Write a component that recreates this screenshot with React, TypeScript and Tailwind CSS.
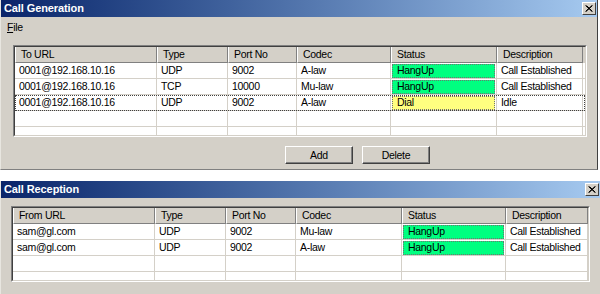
import React from "react";

type Cell = { text: string; status?: "green" | "yellow" };

function CloseBtn() {
  return (
    <div className="w-[14px] h-[13px] bg-[#d4d0c8] border border-t-white border-l-white border-b-[#404040] border-r-[#404040] flex items-center justify-center">
      <svg width="8" height="7" viewBox="0 0 8 7">
        <path d="M0.5 0.5 L7 6.5 M1.5 0.5 L7.5 6.5 M7 0.5 L0.5 6.5 M7.5 0.5 L1 6.5" stroke="#000" strokeWidth="1" />
      </svg>
    </div>
  );
}

function TitleBar({ title }: { title: string }) {
  return (
    <div className="h-[17px] flex items-center justify-between bg-linear-to-r from-[#0a246a] to-[#a6caf0] pl-[3px] pr-[1px]">
      <span className="text-white font-bold text-[11px] leading-none tracking-[-0.1px]">{title}</span>
      <CloseBtn />
    </div>
  );
}

function Grid({
  widths,
  headers,
  rows,
  emptyRows,
  partial,
  focusRow,
  className,
}: {
  widths: number[];
  headers: string[];
  rows: Cell[][];
  emptyRows: number;
  partial: number;
  focusRow?: number;
  className: string;
}) {
  return (
    <div className={"border border-t-[#808080] border-l-[#808080] border-b-white border-r-white " + className}>
      <div className="h-full border border-t-[#404040] border-l-[#404040] border-b-[#d4d0c8] border-r-[#d4d0c8] bg-white overflow-hidden">
        <div className="flex h-[16px] bg-[#d4d0c8]">
          {headers.map((h, i) => (
            <div
              key={i}
              style={{ width: widths[i] }}
              className="shrink-0 h-full flex items-center pl-[5px] border-l border-l-white border-r border-r-[#808080] border-b border-b-[#808080]"
            >
              {h}
            </div>
          ))}
        </div>
        {rows.map((r, ri) => (
          <div
            key={ri}
            className={
              "flex h-[16px] border-b border-[#d4d0c8]" +
              (ri === focusRow ? " outline-1 outline-dotted outline-[#404040] -outline-offset-1" : "")
            }
          >
            {r.map((c, ci) => (
              <div
                key={ci}
                style={{ width: widths[ci] }}
                className="shrink-0 h-full border-r border-[#d4d0c8] flex items-center"
              >
                {c.status ? (
                  <div
                    className={
                      "mx-[1px] h-[14px] w-full flex items-center pl-[4px] border border-dotted border-[#707070] " +
                      (c.status === "green" ? "bg-[#00ff80]" : "bg-[#ffff80]")
                    }
                  >
                    {c.text}
                  </div>
                ) : (
                  <span className="pl-[4px]">{c.text}</span>
                )}
              </div>
            ))}
          </div>
        ))}
        {Array.from({ length: emptyRows }).map((_, ri) => (
          <div key={"e" + ri} className="flex h-[16px] border-b border-[#d4d0c8]">
            {widths.map((w, ci) => (
              <div key={ci} style={{ width: w }} className="shrink-0 h-full border-r border-[#d4d0c8]" />
            ))}
          </div>
        ))}
        <div className="flex" style={{ height: partial }}>
          {widths.map((w, ci) => (
            <div key={ci} style={{ width: w }} className="shrink-0 h-full border-r border-[#d4d0c8]" />
          ))}
        </div>
      </div>
    </div>
  );
}

function Button({ label }: { label: string }) {
  return (
    <div className="w-[68px] h-[18px] bg-[#d4d0c8] border border-t-white border-l-white border-b-[#404040] border-r-[#404040] flex items-center justify-center shadow-[inset_-1px_-1px_0_#808080]">
      {label}
    </div>
  );
}

export default function App() {
  const genHeaders = ["To URL", "Type", "Port No", "Codec", "Status", "Description"];
  const genWidths = [142, 71, 69, 94, 106, 86];
  const genRows: Cell[][] = [
    [{ text: "0001@192.168.10.16" }, { text: "UDP" }, { text: "9002" }, { text: "A-law" }, { text: "HangUp", status: "green" }, { text: "Call Established" }],
    [{ text: "0001@192.168.10.16" }, { text: "TCP" }, { text: "10000" }, { text: "Mu-law" }, { text: "HangUp", status: "green" }, { text: "Call Established" }],
    [{ text: "0001@192.168.10.16" }, { text: "UDP" }, { text: "9002" }, { text: "A-law" }, { text: "Dial", status: "yellow" }, { text: "Idle" }],
  ];
  const recHeaders = ["From URL", "Type", "Port No", "Codec", "Status", "Description"];
  const recWidths = [142, 71, 70, 106, 104, 82];
  const recRows: Cell[][] = [
    [{ text: "sam@gl.com" }, { text: "UDP" }, { text: "9002" }, { text: "Mu-law" }, { text: "HangUp", status: "green" }, { text: "Call Established" }],
    [{ text: "sam@gl.com" }, { text: "UDP" }, { text: "9002" }, { text: "A-law" }, { text: "HangUp", status: "green" }, { text: "Call Established" }],
  ];

  return (
    <div
      className="w-[600px] h-[294px] bg-white text-black text-[10.5px] leading-none tracking-[-0.3px] overflow-hidden"
      style={{ fontFamily: '"Liberation Sans", Arial, sans-serif' }}
    >
      {/* Window 1 */}
      <div className="w-[598px] h-[170px] bg-[#d4d0c8] border-l border-l-[#e8e6e0] border-r border-r-[#404040] border-b border-b-[#808080] flex flex-col">
        <TitleBar title="Call Generation" />
        <div className="h-[20px] flex items-center pl-[6px] text-[10.5px]">
          <span>
            <span className="underline">F</span>ile
          </span>
        </div>
        <div className="pt-[8px] pl-[12px]">
          <Grid
            className="w-[574px] h-[92px]"
            widths={genWidths}
            headers={genHeaders}
            rows={genRows}
            emptyRows={1}
            partial={10}
            focusRow={2}
          />
        </div>
        <div className="flex gap-[9px] pl-[284px] pt-[9px]">
          <Button label="Add" />
          <Button label="Delete" />
        </div>
      </div>

      <div className="h-[11px]" />

      {/* Window 2 */}
      <div className="w-[600px] h-[113px] bg-[#d4d0c8] border-l border-l-[#e8e6e0] flex flex-col">
        <TitleBar title="Call Reception" />
        <div className="pt-[8px] pl-[10px]">
          <Grid
            className="w-[579px] h-[76px]"
            widths={recWidths}
            headers={recHeaders}
            rows={recRows}
            emptyRows={1}
            partial={10}
          />
        </div>
      </div>
    </div>
  );
}
